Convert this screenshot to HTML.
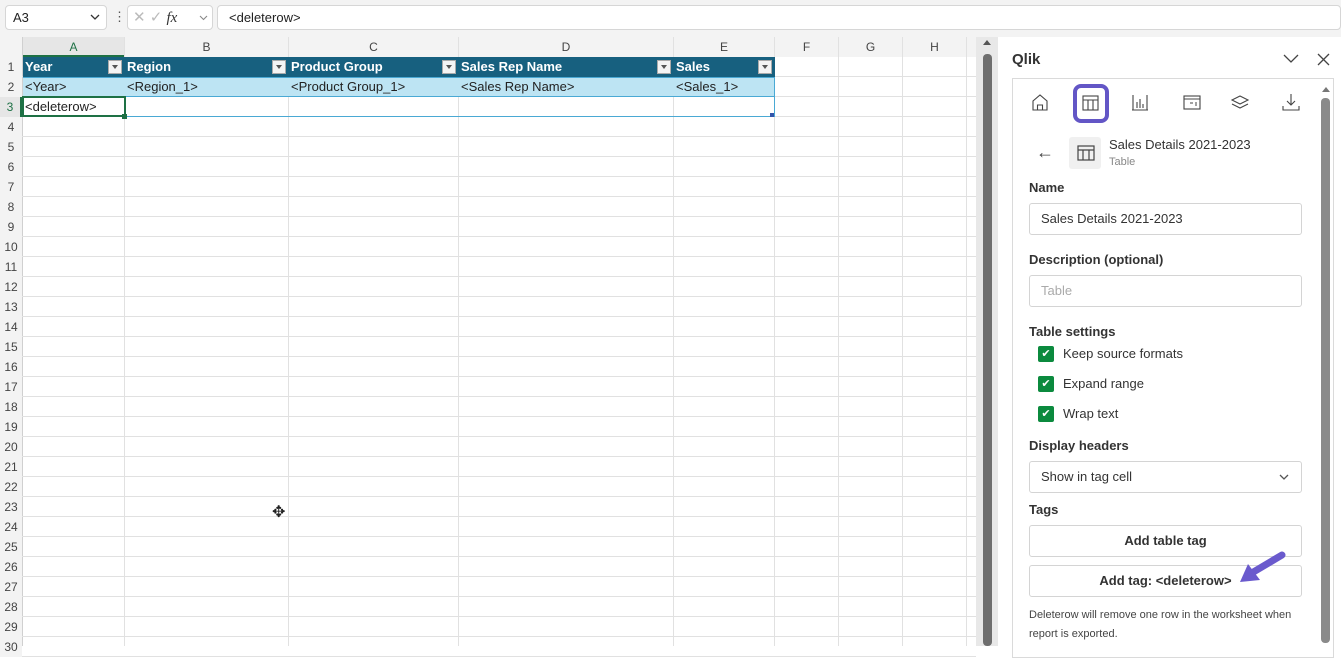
<!DOCTYPE html>
<html><head><style>
*{box-sizing:border-box;margin:0;padding:0}
body{width:1341px;height:646px;overflow:hidden;background:#fff;font-family:"Liberation Sans",sans-serif;position:relative;font-size:13px;color:#222}
.abs{position:absolute}
.top{left:0;top:0;width:1341px;height:37px;background:#f3f3f3}
.box{background:#fff;border:1px solid #d6d6d6;border-radius:4px;position:absolute}
.grid{left:0;top:37px;width:976px;height:609px;background:#fff}
.hl{position:absolute;background:#e1e1e1}
.colh{position:absolute;top:37px;height:20px;background:#f3f3f3;text-align:center;line-height:20px;font-size:12px;color:#444}
.rown{position:absolute;left:0;width:22px;height:20px;background:#f3f3f3;text-align:center;line-height:20px;font-size:12px;color:#444}
.th{position:absolute;top:57px;height:20px;background:#17607f;color:#fff;font-weight:bold;font-size:13px;line-height:20px;padding-left:2px}
.dd{position:absolute;right:3px;top:3px;width:14px;height:14px;background:#f4f4f4;border:1px solid #aaa}
.dd:after{content:"";position:absolute;left:3px;top:4px;border-left:3px solid transparent;border-right:3px solid transparent;border-top:4px solid #555}
.td{position:absolute;top:77px;height:20px;background:#bde4f3;line-height:20px;font-size:13px;padding-left:2px}
.lbl{position:absolute;left:1029px;font-weight:bold;font-size:13px;color:#333}
.inp{position:absolute;left:1029px;width:273px;height:32px;border:1px solid #d4d4d4;border-radius:3px;line-height:30px;padding-left:11px;font-size:13px;color:#333}
.cb{position:absolute;left:1038px;width:16px;height:16px;background:#0b8a3e;border-radius:2px;color:#fff;font-size:11px;text-align:center;line-height:16px}
.cbt{position:absolute;left:1063px;font-size:13px;color:#333}
.btn{position:absolute;left:1029px;width:273px;height:32px;border:1px solid #d4d4d4;border-radius:3px;text-align:center;line-height:30px;font-weight:bold;font-size:13px;color:#333}
</style></head><body>
<div class="abs top"></div>
<div class="box" style="left:5px;top:5px;width:102px;height:25px;line-height:23px;padding-left:7px;font-size:13px">A3<svg style="position:absolute;right:6px;top:8px" width="10" height="7"><path d="M1 1l4 4 4-4" fill="none" stroke="#333" stroke-width="1.3"/></svg></div>
<div class="abs" style="left:113px;top:9px;font-size:13px;color:#555">&#8942;</div>
<div class="box" style="left:127px;top:5px;width:86px;height:25px;color:#bbb;line-height:23px;font-size:15px;padding-left:5px">✕ ✓ <i style="color:#333;font-family:'Liberation Serif',serif">fx</i><svg style="position:absolute;right:4px;top:9px" width="9" height="6"><path d="M1 1l3.5 3.5L8 1" fill="none" stroke="#888" stroke-width="1.1"/></svg></div>
<div class="box" style="left:217px;top:5px;width:1124px;height:25px;line-height:23px;padding-left:11px;font-size:13px">&lt;deleterow&gt;</div>

<div class="abs grid"></div>
<div class="hl" style="left:124px;top:37px;width:1px;height:609px"></div>
<div class="hl" style="left:288px;top:37px;width:1px;height:609px"></div>
<div class="hl" style="left:458px;top:37px;width:1px;height:609px"></div>
<div class="hl" style="left:673px;top:37px;width:1px;height:609px"></div>
<div class="hl" style="left:774px;top:37px;width:1px;height:609px"></div>
<div class="hl" style="left:838px;top:37px;width:1px;height:609px"></div>
<div class="hl" style="left:902px;top:37px;width:1px;height:609px"></div>
<div class="hl" style="left:966px;top:37px;width:1px;height:609px"></div>
<div class="hl" style="left:22px;top:37px;width:1px;height:609px;background:#d0d0d0"></div>
<div id="rows"></div>
<div class="colh" style="left:0;width:22px"></div>
<div class="colh" style="left:23px;width:101px;color:#1e7145;border-bottom:2px solid #1e7145;background:#e6e6e6">A</div>
<div class="colh" style="left:125px;width:163px">B</div>
<div class="colh" style="left:289px;width:169px">C</div>
<div class="colh" style="left:459px;width:214px">D</div>
<div class="colh" style="left:674px;width:100px">E</div>
<div class="colh" style="left:775px;width:63px">F</div>
<div class="colh" style="left:839px;width:63px">G</div>
<div class="colh" style="left:903px;width:63px">H</div>
<div class="colh" style="left:967px;width:9px"></div>

<div class="th" style="left:23px;width:102px">Year<div class="dd"></div></div>
<div class="th" style="left:125px;width:164px">Region<div class="dd"></div></div>
<div class="th" style="left:289px;width:170px">Product Group<div class="dd"></div></div>
<div class="th" style="left:459px;width:215px">Sales Rep Name<div class="dd"></div></div>
<div class="th" style="left:674px;width:101px">Sales<div class="dd"></div></div>
<div class="td" style="left:23px;width:752px;border-top:1px solid #4aa9d4;border-bottom:1px solid #4aa9d4"></div>
<div class="abs" style="left:25px;top:79px">&lt;Year&gt;</div>
<div class="abs" style="left:127px;top:79px">&lt;Region_1&gt;</div>
<div class="abs" style="left:291px;top:79px">&lt;Product Group_1&gt;</div>
<div class="abs" style="left:461px;top:79px">&lt;Sales Rep Name&gt;</div>
<div class="abs" style="left:676px;top:79px">&lt;Sales_1&gt;</div>
<div class="abs" style="left:23px;top:116px;width:752px;height:1px;background:#4aa9d4"></div>
<div class="abs" style="left:774px;top:77px;width:1px;height:40px;background:#4aa9d4"></div>
<div class="abs" style="left:22px;top:96px;width:104px;height:21px;border:2px solid #1e7145;padding-left:1px;line-height:17px;background:#fff">&lt;deleterow&gt;</div>
<div class="abs" style="left:122px;top:114px;width:5px;height:5px;background:#1e7145"></div>
<div class="abs" style="left:770px;top:113px;width:4px;height:4px;background:#3355aa"></div>
<div class="abs" style="left:272px;top:502px;font-size:16px">✥</div>

<div class="abs" style="left:976px;top:37px;width:22px;height:609px;background:#e8e8e8"></div>
<div class="abs" style="left:983px;top:54px;width:9px;height:592px;background:#6e6e6e;border-radius:4px"></div>
<div class="abs" style="left:983px;top:40px;border-left:4px solid transparent;border-right:4px solid transparent;border-bottom:5px solid #555"></div>

<div class="abs" style="left:998px;top:37px;width:343px;height:609px;background:#fff"></div>
<div class="abs" style="left:1012px;top:51px;font-size:15px;font-weight:bold;color:#333">Qlik</div>
<svg class="abs" style="left:1283px;top:54px" width="16" height="10"><path d="M1 1l7 7 7-7" fill="none" stroke="#444" stroke-width="1.3"/></svg>
<svg class="abs" style="left:1317px;top:53px" width="13" height="13"><path d="M1 1l11 11M12 1L1 12" fill="none" stroke="#444" stroke-width="1.3"/></svg>
<div class="abs" style="left:1012px;top:78px;width:322px;height:580px;border:1px solid #dadada"></div>
<div class="abs" style="left:1321px;top:98px;width:9px;height:545px;background:#8a8a8a;border-radius:4px"></div>
<div class="abs" style="left:1322px;top:87px;border-left:4px solid transparent;border-right:4px solid transparent;border-bottom:5px solid #777"></div>

<svg class="abs" style="left:1020px;top:84px" width="290" height="40" fill="none" stroke="#444" stroke-width="1.1">
<path d="M13 26V17l7-6 7 6v9zM17.5 26v-5h5v5"/>
<rect x="55" y="2" width="32" height="35" rx="6" stroke="#6356c6" stroke-width="4"/>
<rect x="63" y="12" width="15" height="14"/><path d="M63 16h15M68 16v10M73 16v10"/>
<path d="M113 11v15h14V11M112 26h16M117 24v-6M120 24v-9M123 24v-4"/>
<rect x="164" y="12" width="16" height="13"/><path d="M164 15h16M170 19h3M175 19h2M175 21h2"/>
<path d="M220 12l8 4-8 4-8-4zM212 20l8 4 8-4"/>
<path d="M271 10v11M267 17l4 4 4-4M263 22v4h16v-4"/>
</svg>
<div class="abs" style="left:1036px;top:142px;font-size:18px;color:#444">&larr;</div>
<div class="abs" style="left:1069px;top:137px;width:32px;height:32px;background:#f0f0f0;border-radius:3px"></div>
<svg class="abs" style="left:1077px;top:145px" width="18" height="16" fill="none" stroke="#444" stroke-width="1.2"><rect x="1" y="1" width="16" height="14"/><path d="M1 5h16M6 5v10M12 5v10"/></svg>
<div class="abs" style="left:1109px;top:137px;font-size:13px;color:#333">Sales Details 2021-2023</div>
<div class="abs" style="left:1109px;top:156px;font-size:11px;color:#888">Table</div>

<div class="lbl" style="top:180px">Name</div>
<div class="inp" style="top:203px">Sales Details 2021-2023</div>
<div class="lbl" style="top:252px">Description (optional)</div>
<div class="inp" style="top:275px;color:#aaa">Table</div>
<div class="lbl" style="top:324px">Table settings</div>
<div class="cb" style="top:346px">✔</div><div class="cbt" style="top:346px">Keep source formats</div>
<div class="cb" style="top:376px">✔</div><div class="cbt" style="top:376px">Expand range</div>
<div class="cb" style="top:406px">✔</div><div class="cbt" style="top:406px">Wrap text</div>
<div class="lbl" style="top:438px">Display headers</div>
<div class="inp" style="top:461px">Show in tag cell<svg style="position:absolute;right:12px;top:12px" width="10" height="7"><path d="M1 1l4 4 4-4" fill="none" stroke="#555" stroke-width="1.3"/></svg></div>
<div class="lbl" style="top:502px">Tags</div>
<div class="btn" style="top:525px">Add table tag</div>
<div class="btn" style="top:565px">Add tag: &lt;deleterow&gt;</div>
<svg class="abs" style="left:1236px;top:550px" width="50" height="36"><path d="M46 5L14 24" stroke="#6a5acd" stroke-width="7" stroke-linecap="round"/><path d="M4 32L12 14L24 30Z" fill="#6a5acd"/></svg>
<div class="abs" style="left:1029px;top:606px;font-size:11px;color:#444;line-height:19px;width:280px">Deleterow will remove one row in the worksheet when report is exported.</div>

<script>
var h='';for(var n=1;n<=30;n++){var t=57+(n-1)*20;h+='<div class="hl" style="left:0;top:'+(t+19)+'px;width:976px;height:1px"></div><div class="rown" style="top:'+t+'px;'+(n==3?'color:#1e7145;background:#e6e6e6;border-right:2px solid #1e7145':'')+'">'+n+'</div>';}
document.getElementById('rows').innerHTML=h;
</script>
</body></html>
